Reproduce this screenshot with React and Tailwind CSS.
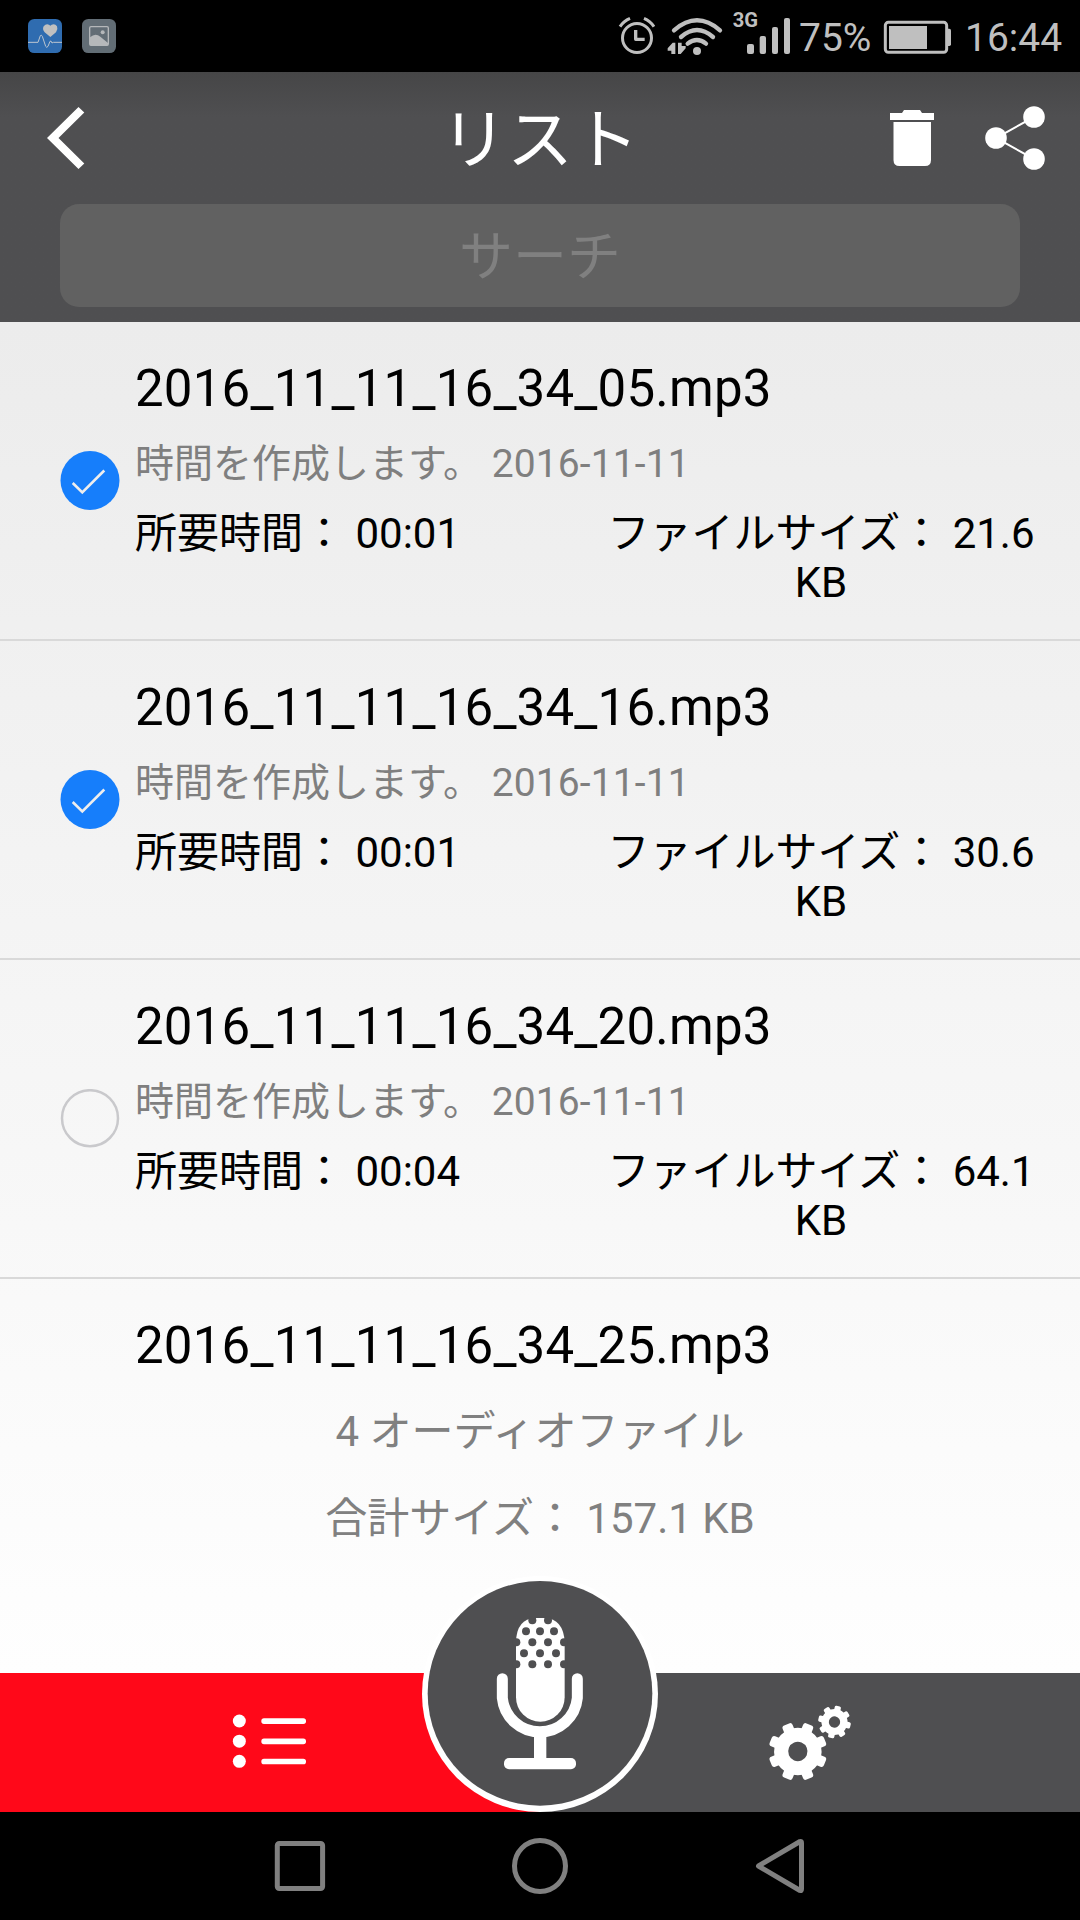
import React from "react";

const files = [
  { name: "2016_11_11_16_34_05.mp3", time: "00:01", size: "21.6", checked: true },
  { name: "2016_11_11_16_34_16.mp3", time: "00:01", size: "30.6", checked: true },
  { name: "2016_11_11_16_34_20.mp3", time: "00:04", size: "64.1", checked: false },
];

function StatusBar() {
  return (
    <div className="flex h-[72px] items-start bg-black text-[#bfbfbf]">
      <svg className="mt-[19px] ml-[28px] h-[34px] w-[34px] shrink-0" viewBox="84 57 102 102">
        <rect x="84" y="57" width="102" height="102" rx="19" fill="#2f6cb0" />
        <path d="M84 127H114L121 107Q124 103 127 109L137 139Q140 145 144 139L150 124Q153 120 156 129L160 127H186" fill="none" stroke="#bcc6d0" strokeWidth="3" />
        <path d="M151 111L134 97Q126 88 131 79Q138 70 147 74L151 77L155 74Q165 70 171 79Q175 88 168 97Z" fill="#c0c0c0" />
      </svg>
      <svg className="mt-[19px] ml-[20px] h-[34px] w-[34px] shrink-0" viewBox="246 57 102 102">
        <rect x="246" y="57" width="102" height="102" rx="19" fill="#626d75" />
        <rect x="269" y="80" width="56" height="56" rx="4" fill="none" stroke="#b5b8ba" strokeWidth="4" />
        <circle cx="308" cy="97" r="6" fill="#b5b8ba" />
        <path d="M270 112Q286 97 301 110L324 129V136H270Z" fill="#b5b8ba" />
      </svg>
      <svg className="ml-auto h-[72px] w-[39px] shrink-0" viewBox="48 0 117 216" fill="none" stroke="#bfbfbf">
        <circle cx="111" cy="114" r="43.500" strokeWidth="9" />
        <path d="M107 90V118H134" strokeWidth="10" strokeLinejoin="round" />
        <path d="M60 80Q71 63 90 55M132 55Q151 63 162 80" strokeWidth="9" />
      </svg>
      <svg className="ml-[10px] h-[72px] w-[130px] shrink-0" viewBox="195 0 390 216">
        <g fill="none" stroke="#bfbfbf" strokeLinecap="round" strokeWidth="13">
          <path d="M222 91Q291 31 360 91" />
          <path d="M243 111Q291 69 339 111" />
          <path d="M263 131Q291 109 318 131" />
        </g>
        <g fill="#bfbfbf">
          <circle cx="291" cy="153" r="12" />
          <path d="M226 128V162H214V152H203V145L218 128Z" />
          <path d="M234 128H245V138H257V145L242 162H234Z" />
          <rect x="441" y="132" width="21" height="30" rx="6" />
          <rect x="479" y="108" width="19" height="54" rx="6" />
          <rect x="516" y="81" width="18" height="81" rx="6" />
          <rect x="552" y="54" width="18" height="108" rx="6" />
        </g>
        <text x="398" y="80" fontFamily="Roboto" fontWeight="700" fontSize="58" textLength="76" lengthAdjust="spacingAndGlyphs" fill="#bfbfbf">3G</text>
      </svg>
      <span className="mt-[15px] ml-[4px] w-[72px] font-[Roboto] text-[39px] leading-[46px]">75%</span>
      <svg className="ml-[12px] h-[72px] w-[72px] shrink-0" viewBox="849 0 216 216">
        <rect x="856" y="67" width="184" height="90" rx="9" fill="none" stroke="#bfbfbf" strokeWidth="9" />
        <rect x="867" y="78" width="114" height="69" fill="#bfbfbf" />
        <path d="M1042 86H1048Q1053 86 1053 91V133Q1053 138 1048 138H1042Z" fill="#bfbfbf" />
      </svg>
      <span className="mt-[15px] mr-[17px] ml-[10px] w-[98px] font-[Roboto] text-[39px] leading-[46px]">16:44</span>
    </div>
  );
}

function Header() {
  return (
    <header className="h-[250px] bg-linear-to-b from-[#464647] to-[#4f4f51] to-[18%]">
      <div className="grid h-[132px] grid-cols-3 items-center">
        <svg className="ml-[45px] h-[66px] w-[42px]" viewBox="45 105 42 66">
          <path d="M47 138L78.5 107L84.3 112.5L58.5 138L84.3 163.5L78.5 169Z" fill="#fff" />
        </svg>
        <h1 className="pt-[6px] text-center text-[66px] leading-[72px] text-white">リスト</h1>
        <div className="flex items-center justify-end gap-[50px] pr-[33px]">
          <svg className="h-[66px] w-[46px]" viewBox="889 105 46 66" fill="#fff">
            <path d="M902 113L904 110H920L922 113H934V120H890V113Z" />
            <path d="M893.5 122H931V160Q931 166 925 166H899.500Q893.500 166 893.500 160Z" />
          </svg>
          <svg className="h-[66px] w-[62px]" viewBox="984.500 105 62 66" fill="#fff">
            <path d="M1033.500 117L995.500 138L1033.500 159" fill="none" stroke="#fff" strokeWidth="2" />
            <circle cx="1033.500" cy="117" r="10.800" />
            <circle cx="995.500" cy="138" r="10.800" />
            <circle cx="1033.500" cy="159" r="10.800" />
          </svg>
        </div>
      </div>
      <div className="mx-[60px] h-[103px] rounded-[19px] bg-[#616161] text-center text-[54px] leading-[108px] text-[#808080]">サーチ</div>
    </header>
  );
}

function CheckMark({ checked }) {
  return (
    <svg className="mt-[129px] ml-[60px] h-[60px] w-[60px] shrink-0" viewBox="0 0 60 60">
      {checked ? (
        <>
          <circle cx="30" cy="29.500" r="29.500" fill="#167efb" />
          <path d="M12.700 32L22.300 41.500L44.300 19.500" fill="none" stroke="#eee" strokeWidth="2.600" />
        </>
      ) : (
        <circle cx="30" cy="29.200" r="28" fill="none" stroke="#c9c9cc" strokeWidth="2.500" />
      )}
    </svg>
  );
}

function FileRow({ file }) {
  return (
    <div className="flex h-[319px] border-b-2 border-[#d9d9d9]">
      <CheckMark checked={file.checked} />
      <div className="ml-[15px] flex-1 pt-[37px]">
        <div className="text-[51px] leading-[60px] tracking-[0.21px]">{file.name}</div>
        <div className="mt-[22px] text-[39px] leading-[46px] text-[#7f7f7f]">
          時間を作成します。 <span className="tracking-[0.1px]">2016-11-11</span>
        </div>
        <div className="mt-[22px] flex justify-between pr-[44px] text-[42px] leading-[49px]">
          <span>所要時間： {file.time}</span>
          <span className="w-[430px] text-center whitespace-nowrap">
            ファイルサイズ： {file.size}
            <br />
            KB
          </span>
        </div>
      </div>
    </div>
  );
}

function MicButton() {
  const holes = [
    [397, 181], [444, 181], [378, 214], [420, 214], [462, 214], [349, 247], [397, 247], [444, 247], [492, 247],
    [372, 280], [420, 280], [468, 280], [349, 313], [397, 313], [444, 313], [492, 313],
  ];
  return (
    <svg className="absolute bottom-0 left-[422px] h-[236px] w-[236px]" viewBox="66 48 708 708">
      <circle cx="420" cy="402" r="354" fill="#fff" />
      <circle cx="420" cy="400" r="337" fill="#4f4f51" />
      <path d="M348 246Q350 176 406 174H434Q490 176 494 246V412A73 73 0 0 1 348 412Z" fill="#fff" />
      {holes.map(([x, y]) => (
        <circle key={`${x}-${y}`} cx={x} cy={y} r="12" fill="#4f4f51" />
      ))}
      <path d="M307 356V414A113 112 0 0 0 532 414V356" fill="none" stroke="#fff" strokeWidth="33" strokeLinecap="round" />
      <rect x="402" y="530" width="37" height="75" fill="#fff" />
      <rect x="312" y="594" width="216" height="34" rx="15" fill="#fff" />
    </svg>
  );
}

function Gear({ cx, cy, body, outer, hole, tooth, turn }) {
  return (
    <g transform={`translate(${cx} ${cy}) rotate(${turn})`}>
      {[0, 45, 90, 135, 180, 225, 270, 315].map((a) => (
        <rect key={a} x={-tooth / 2} y={-outer} width={tooth} height={outer - hole - 4} rx={tooth / 4} transform={`rotate(${a})`} fill="#fff" />
      ))}
      <circle r={(body + hole) / 2} fill="none" stroke="#fff" strokeWidth={body - hole} />
    </g>
  );
}

function TabBar() {
  return (
    <div className="relative flex h-[139px]">
      <div className="flex flex-1 items-center justify-center bg-[#ff0819] pb-[3px]">
        <svg className="h-[60px] w-[80px]" viewBox="90 154 240 180" fill="#fff">
          {[184, 244.500, 305].map((y) => (
            <g key={y}>
              <circle cx="118" cy={y} r="19.500" />
              <rect x="184" y={y - 8} width="134" height="17" rx="8" />
            </g>
          ))}
        </svg>
      </div>
      <div className="flex flex-1 items-center justify-center bg-[#4f4f51] pb-[5px]">
        <svg className="h-[120px] w-[140px]" viewBox="0 0 420 360">
          <Gear cx={173.500} cy={214.500} body={71} outer={88} hole={29} tooth={32} turn={22.500} />
          <Gear cx={283.500} cy={126} body={39} outer={49} hole={17} tooth={19} turn={13} />
        </svg>
      </div>
      <MicButton />
    </div>
  );
}

function NavBar() {
  return (
    <nav className="grid h-[108px] grid-cols-[480px_120px_480px] bg-black">
      <svg className="h-[108px] w-[480px]" viewBox="0 0 480 108" fill="none" stroke="#808080" strokeWidth="5">
        <rect x="277.300" y="31.500" width="45.300" height="45" rx="2" />
      </svg>
      <svg className="h-[108px] w-[120px]" viewBox="0 0 120 108" fill="none" stroke="#808080" strokeWidth="5">
        <circle cx="60" cy="54" r="25.500" />
      </svg>
      <svg className="h-[108px] w-[480px]" viewBox="600 0 480 108" fill="none" stroke="#808080" strokeWidth="5" strokeLinejoin="round">
        <path d="M758.500 54L800 29.500Q801.500 29 801.500 31V77Q801.500 79 800 78.500Z" />
      </svg>
    </nav>
  );
}

export default function App() {
  return (
    <div className="flex h-[1920px] w-[1080px] flex-col overflow-hidden font-[Roboto,'Noto_Sans_CJK_JP',sans-serif] text-black" lang="ja">
      <StatusBar />
      <Header />
      <main className="h-[1351px] bg-linear-to-b from-[#ececec] to-[#fefefe]">
        {files.map((file) => (
          <FileRow key={file.name} file={file} />
        ))}
        <div className="pt-[37px] pl-[135px] text-[51px] leading-[60px] tracking-[0.21px]">2016_11_11_16_34_25.mp3</div>
        <div className="mt-[12px] text-center text-[42px] leading-[87px] text-[#808080]">
          <div>4 オーディオファイル</div>
          <div>合計サイズ： 157.1 KB</div>
        </div>
      </main>
      <TabBar />
      <NavBar />
    </div>
  );
}
